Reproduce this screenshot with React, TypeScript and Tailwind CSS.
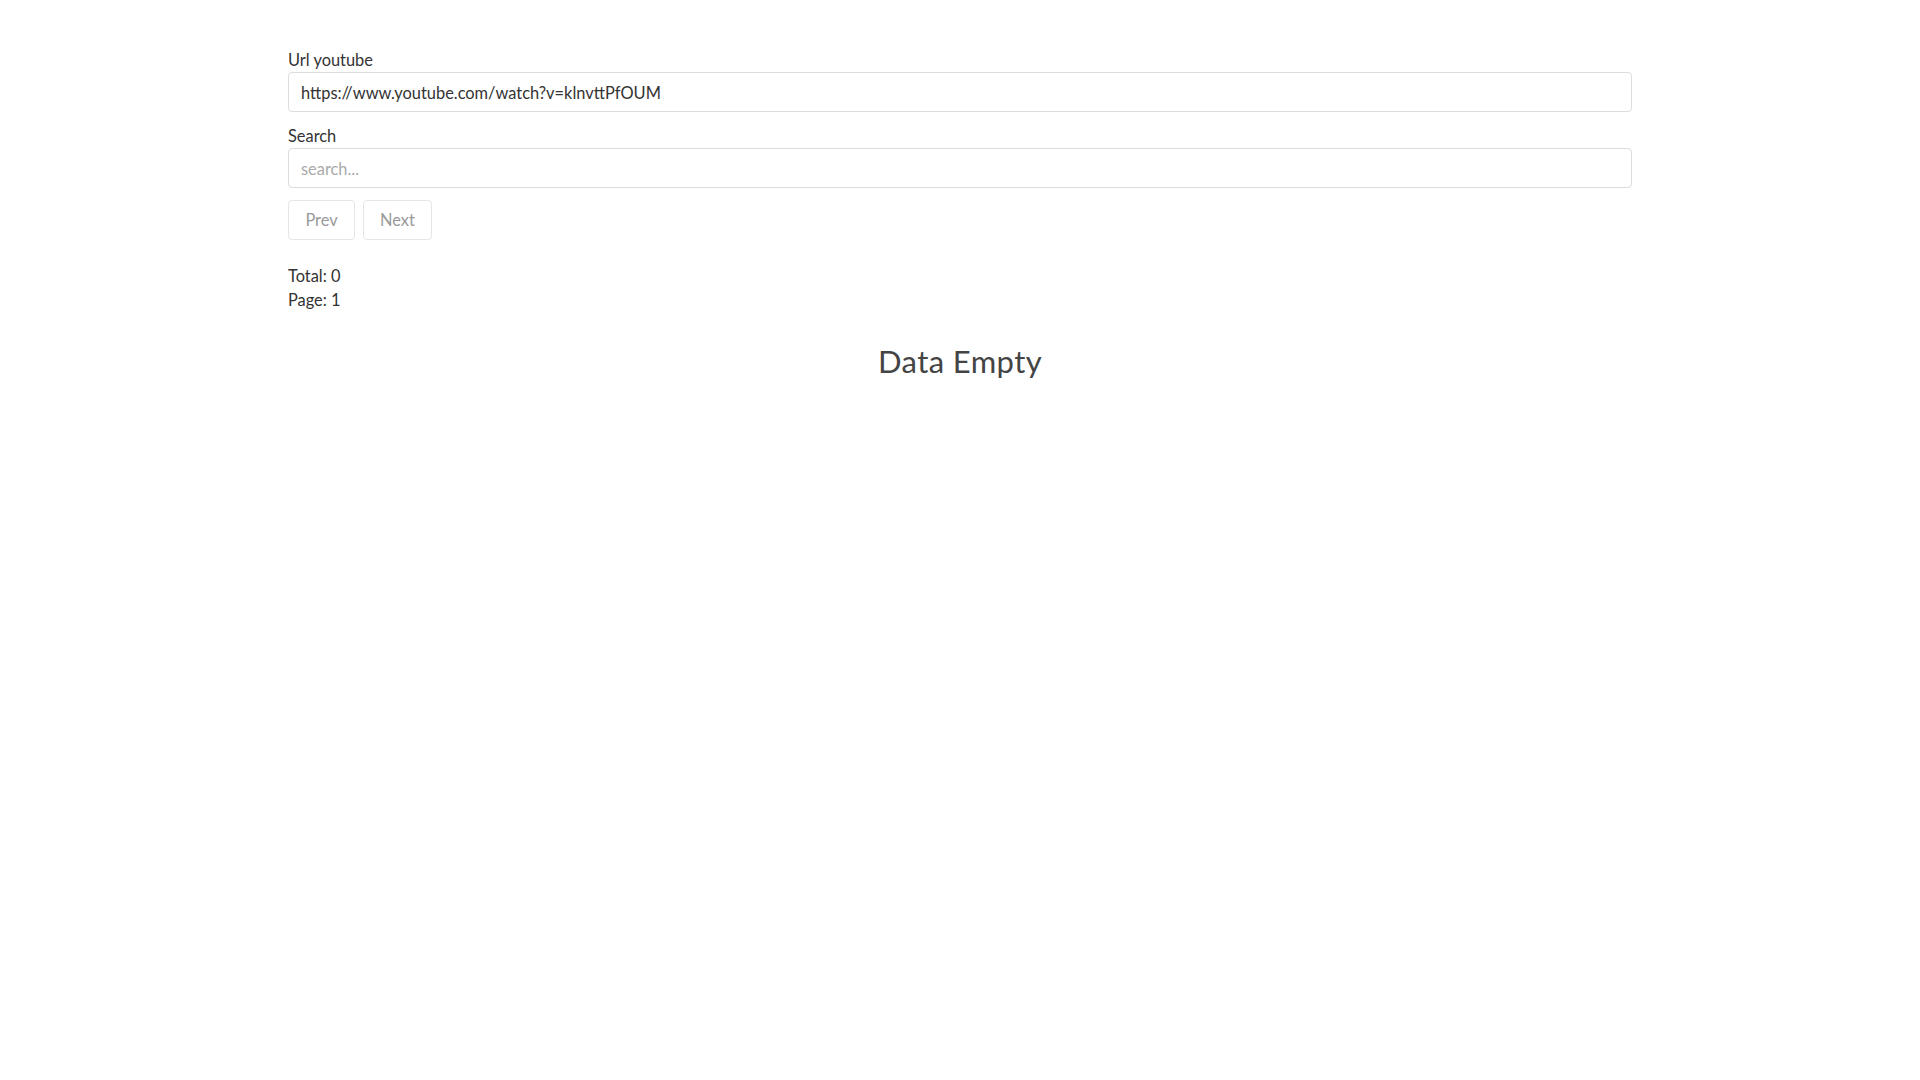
import React from "react";

export default function App() {
  return (
    <div className="min-h-screen bg-white text-[#333] text-[16.4px] leading-6" style={{ fontFamily: "Lato, 'Noto Sans', sans-serif" }}>
      <div className="mx-auto w-[1344px] pt-12">
        <label className="block h-6">Url youtube</label>
        <input
          className="block w-full h-10 px-3 border border-[#dcdcdc] rounded-[4px] text-[#333] outline-none"
          defaultValue="https://www.youtube.com/watch?v=klnvttPfOUM"
        />
        <label className="block h-6 mt-3">Search</label>
        <input
          className="block w-full h-10 px-3 border border-[#dcdcdc] rounded-[4px] outline-none placeholder:text-[#aaa]"
          placeholder="search..."
        />
        <div className="flex gap-2 mt-3">
          <button className="h-10 w-[67px] border border-[#e6e6e6] rounded-[4px] text-[#999]">Prev</button>
          <button className="h-10 w-[69px] border border-[#e6e6e6] rounded-[4px] text-[#999]">Next</button>
        </div>
        <div className="mt-6">Total: 0</div>
        <div>Page: 1</div>
        <h3 className="mt-[31px] text-center text-[31px] leading-[36px] tracking-[0.4px] text-[#444]">Data Empty</h3>
      </div>
    </div>
  );
}
